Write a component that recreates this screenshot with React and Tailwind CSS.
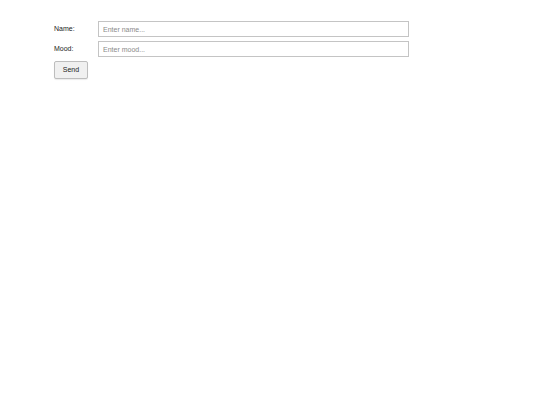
export default function App() {
  return (
    <div className="min-h-screen bg-white pl-[54px] pt-[21px] text-[7px] text-[#222]" style={{ fontFamily: '"Liberation Sans", Arial, sans-serif' }}>
      <div className="flex flex-col gap-[4px]">
        <div className="flex items-center">
          <label className="w-[44px]">Name:</label>
          <input
            type="text"
            placeholder="Enter name..."
            className="h-[16px] w-[311px] border border-[#c4c4c4] bg-white px-[4px] text-[7px] outline-none placeholder:text-[#8a8a8a]"
          />
        </div>
        <div className="flex items-center">
          <label className="w-[44px]">Mood:</label>
          <input
            type="text"
            placeholder="Enter mood..."
            className="h-[16px] w-[311px] border border-[#c4c4c4] bg-white px-[4px] text-[7px] outline-none placeholder:text-[#8a8a8a]"
          />
        </div>
        <div>
          <button className="h-[18px] w-[34px] rounded-[2px] border border-[#bdbdbd] bg-[#f0f0f0] text-[7px] text-[#222] shadow-[0_1px_1px_rgba(0,0,0,0.08)]">
            Send
          </button>
        </div>
      </div>
    </div>
  );
}
